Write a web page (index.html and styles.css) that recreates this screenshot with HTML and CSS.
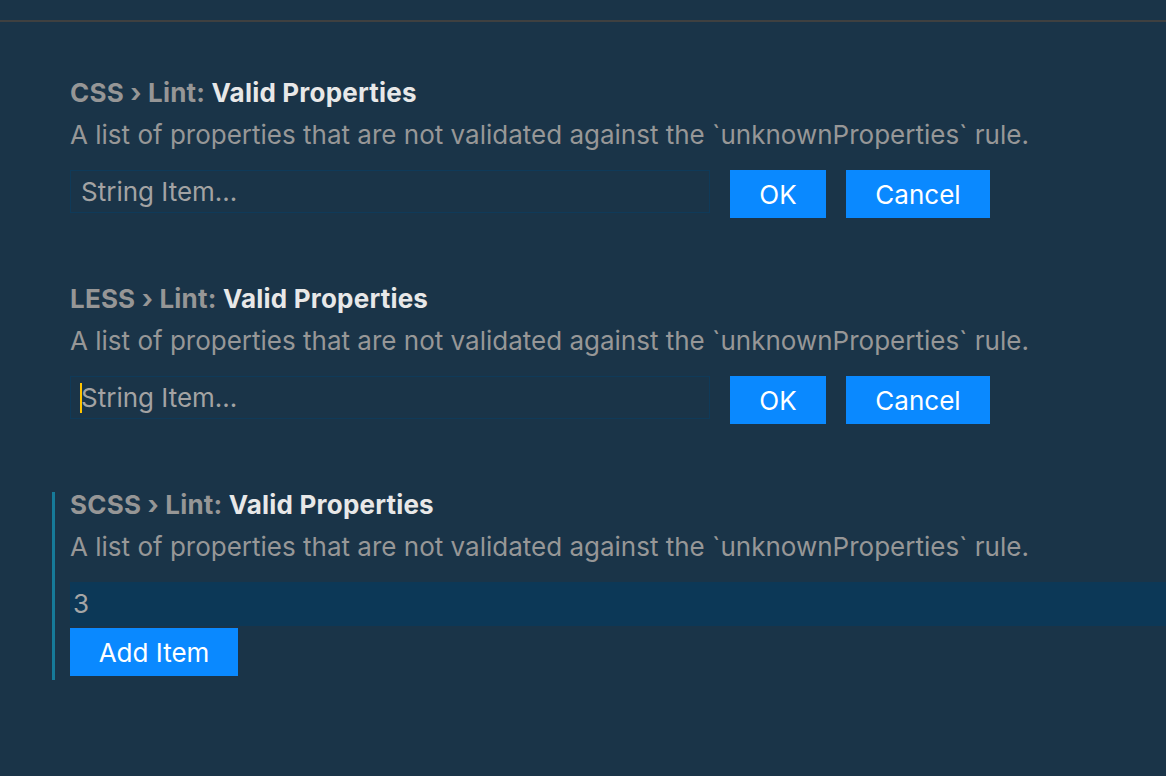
FILE: index.html
```html
<!DOCTYPE html>
<html>
<head>
<meta charset="utf-8">
<link rel="stylesheet" href="styles.css">
</head>
<body>
<div class="topbar"></div>
<div class="list">
  <div class="setting">
    <div class="title"><span class="cat">CSS › Lint: </span><span class="name">Valid Properties</span></div>
    <div class="desc">A list of properties that are not validated against the `unknownProperties` rule.</div>
    <div class="edit-row">
      <div class="input"><span class="placeholder">String Item...</span></div>
      <button class="btn btn-ok">OK</button>
      <button class="btn btn-cancel">Cancel</button>
    </div>
  </div>
  <div class="setting">
    <div class="title"><span class="cat">LESS › Lint: </span><span class="name">Valid Properties</span></div>
    <div class="desc">A list of properties that are not validated against the `unknownProperties` rule.</div>
    <div class="edit-row">
      <div class="input focused"><span class="caret"></span><span class="placeholder">String Item...</span></div>
      <button class="btn btn-ok">OK</button>
      <button class="btn btn-cancel">Cancel</button>
    </div>
  </div>
  <div class="setting active">
    <div class="title"><span class="cat">SCSS › Lint: </span><span class="name">Valid Properties</span></div>
    <div class="desc">A list of properties that are not validated against the `unknownProperties` rule.</div>
    <div class="value-row">3</div>
    <button class="btn btn-add">Add Item</button>
  </div>
</div>
</body>
</html>
```
FILE: styles.css
```css
html, body {
  margin: 0;
  padding: 0;
  background: #1a3448;
  height: 100%;
  overflow: hidden;
}
body {
  font-family: Inter, "Liberation Sans", sans-serif;
}
.topbar {
  height: 20px;
  border-bottom: 2px solid #3f4040;
}
.list {
  padding-top: 58px;
  display: flex;
  flex-direction: column;
  gap: 68px;
}
.setting {
  padding-left: 70px;
  display: flex;
  flex-direction: column;
  align-items: flex-start;
}
.setting.active {
  margin-left: 52px;
  padding-left: 15px;
  border-left: 3px solid #167a99;
  padding-bottom: 4px;
}
.title {
  font-size: 26px;
  line-height: 26px;
  font-weight: 700;
  letter-spacing: 0.2px;
}
.cat { color: #969696; }
.name { color: #e8e8e8; }
.desc {
  margin-top: 16px;
  font-size: 26px;
  line-height: 26px;
  color: #979797;
}
.edit-row {
  margin-top: 22px;
  display: flex;
  align-items: flex-start;
  gap: 20px;
}
.input {
  box-sizing: border-box;
  width: 640px;
  height: 43px;
  border: 1px solid #0f3a59;
  display: flex;
  align-items: center;
  padding-left: 10px;
  font-size: 26px;
  color: #a3a3a3;
  position: relative;
}
.caret {
  position: absolute;
  left: 9px;
  top: 6px;
  width: 2px;
  height: 30px;
  background: #ffc400;
}
.btn {
  border: none;
  margin: 0;
  background: #0a89ff;
  color: #ffffff;
  font-family: Inter, "Liberation Sans", sans-serif;
  font-size: 26px;
  height: 48px;
  padding: 0;
}
.btn-ok { width: 96px; }
.btn-cancel { width: 144px; }
.value-row {
  margin-top: 22px;
  align-self: stretch;
  height: 44px;
  background: #0c3857;
  color: #a6a6a6;
  font-size: 26px;
  line-height: 44px;
  padding-left: 3px;
}
.btn-add {
  margin-top: 2px;
  width: 168px;
}
```
